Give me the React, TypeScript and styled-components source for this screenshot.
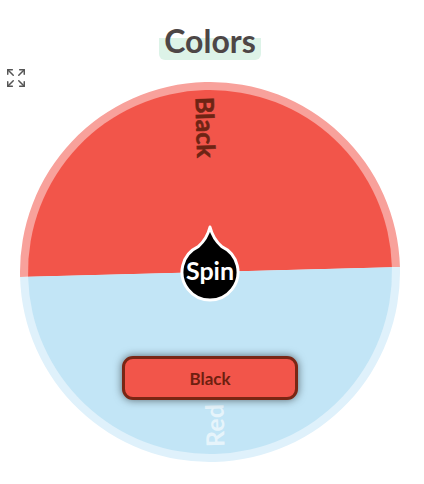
import React from 'react';
import styled, { createGlobalStyle } from 'styled-components';
import { Expand } from 'lucide-react';

const GlobalStyle = createGlobalStyle`
  html, body {
    margin: 0;
    padding: 0;
    background: #ffffff;
  }
  body {
    font-family: Lato, "Open Sans", sans-serif;
  }
`;

const Page = styled.div`
  position: relative;
  width: 424px;
  height: 484px;
  display: flex;
  flex-direction: column;
  align-items: center;
  padding: 21px 4px 0 0;
  box-sizing: border-box;
  overflow: hidden;
`;

const ExpandButton = styled.button`
  position: absolute;
  left: 5px;
  top: 67px;
  padding: 0;
  border: none;
  background: none;
  color: #555;
  display: flex;
`;

const Title = styled.h1`
  margin: 0;
  font-size: 32px;
  line-height: 39px;
  font-weight: 700;
  color: #4d4646;
  padding: 0 5px;
  border-radius: 6px;
  background: linear-gradient(to bottom, transparent 43%, #ddf3e8 43%, #ddf3e8 100%);
`;

const WheelArea = styled.div`
  position: relative;
  width: 380px;
  height: 380px;
  margin-top: 22px;
`;

const WheelSvg = styled.svg`
  display: block;
`;

const SegmentLabel = styled.text<{ $tone: 'dark' | 'light' }>`
  font-family: Lato, "Open Sans", sans-serif;
  font-size: 25px;
  font-weight: 700;
  fill: ${({ $tone }) => ($tone === 'dark' ? '#6e2414' : 'rgba(255,255,255,0.6)')};
  stroke: ${({ $tone }) => ($tone === 'dark' ? '#6e2414' : 'none')};
  stroke-width: 0.6px;
`;

const Pointer = styled.div`
  position: absolute;
  left: 158px;
  top: 140px;
  width: 64px;
  height: 82px;
  display: flex;
  align-items: flex-end;
  justify-content: center;
`;

const PointerShape = styled.svg`
  position: absolute;
  left: 0;
  top: 0;
`;

const SpinLabel = styled.span`
  position: relative;
  font-family: Lato, sans-serif;
  font-size: 25px;
  font-weight: 700;
  color: #ffffff;
  line-height: 1;
  margin-bottom: 21px;
`;

const ResultButton = styled.button`
  position: absolute;
  left: 102px;
  top: 274px;
  width: 176px;
  height: 44px;
  box-sizing: border-box;
  border: 3px solid #7a2614;
  border-radius: 11px;
  background: #f2554a;
  box-shadow: 0 0 8px rgba(0, 0, 0, 0.55);
  font-family: Lato, sans-serif;
  font-size: 17px;
  font-weight: 700;
  color: #6e1f10;
`;

const CX = 190;
const R = 190;
const RING = 8;

export default function App() {
  const ri = R - RING;
  return (
    <>
      <GlobalStyle />
      <Page>
        <ExpandButton aria-label="Expand">
          <Expand size={22} strokeWidth={1.6} />
        </ExpandButton>
        <Title>Colors</Title>
        <WheelArea>
          <WheelSvg width={380} height={380} viewBox="0 0 380 380">
            <g transform={`rotate(-1.5 ${CX} ${CX})`}>
              <path d={`M0 ${CX} A${R} ${R} 0 0 1 ${2 * R} ${CX} Z`} fill="#f8a19b" />
              <path d={`M0 ${CX} A${R} ${R} 0 0 0 ${2 * R} ${CX} Z`} fill="#dff1fb" />
              <path d={`M${RING} ${CX} A${ri} ${ri} 0 0 1 ${2 * R - RING} ${CX} Z`} fill="#f2554a" />
              <path d={`M${RING} ${CX} A${ri} ${ri} 0 0 0 ${2 * R - RING} ${CX} Z`} fill="#c2e5f6" />
              <SegmentLabel
                $tone="dark"
                x={CX}
                y={CX - 175}
                dominantBaseline="central"
                transform={`rotate(90 ${CX} ${CX - 175})`}
              >
                Black
              </SegmentLabel>
              <SegmentLabel
                $tone="light"
                x={CX}
                y={CX + 175}
                dominantBaseline="central"
                transform={`rotate(-90 ${CX} ${CX + 175})`}
              >
                Red
              </SegmentLabel>
            </g>
          </WheelSvg>
          <Pointer>
            <PointerShape width={64} height={82} viewBox="0 0 64 82">
              <path
                d="M32 5 Q35 17 43.8 24.6 A28 28 0 1 1 20.2 24.6 Q29 17 32 5 Z"
                fill="#000"
                stroke="#fff"
                strokeWidth={3}
                strokeLinejoin="round"
              />
            </PointerShape>
            <SpinLabel>Spin</SpinLabel>
          </Pointer>
          <ResultButton>Black</ResultButton>
        </WheelArea>
      </Page>
    </>
  );
}
